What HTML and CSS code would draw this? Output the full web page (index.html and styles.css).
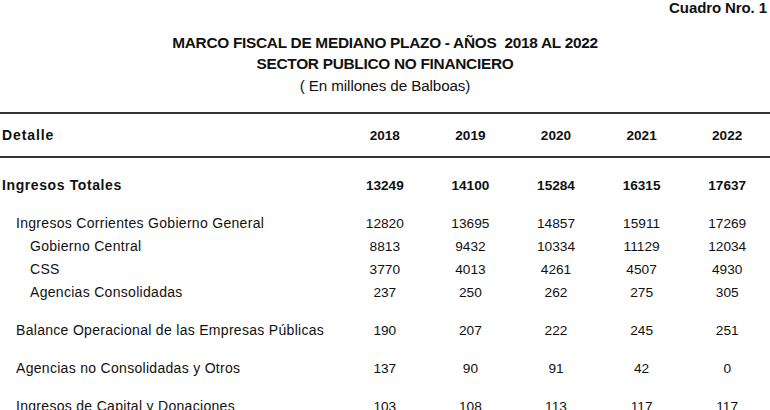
FILE: index.html
```html
<!DOCTYPE html>
<html lang="es">
<head>
<meta charset="utf-8">
<link rel="stylesheet" href="styles.css">
</head>
<body>
<div class="page">
  <div class="cuadro">Cuadro Nro. 1</div>
  <div class="titles">
    <div class="title">MARCO FISCAL DE MEDIANO PLAZO - AÑOS&nbsp; 2018 AL 2022</div>
    <div class="title">SECTOR PUBLICO NO FINANCIERO</div>
    <div class="subtitle">( En millones de Balboas)</div>
  </div>
  <div class="table">
    <div class="row head">
      <div class="label">Detalle</div>
      <div class="num">2018</div><div class="num">2019</div><div class="num">2020</div><div class="num">2021</div><div class="num">2022</div>
    </div>
    <div class="group first">
      <div class="row bold">
        <div class="label">Ingresos Totales</div>
        <div class="num">13249</div><div class="num">14100</div><div class="num">15284</div><div class="num">16315</div><div class="num">17637</div>
      </div>
    </div>
    <div class="group">
      <div class="row">
        <div class="label l1">Ingresos Corrientes Gobierno General</div>
        <div class="num">12820</div><div class="num">13695</div><div class="num">14857</div><div class="num">15911</div><div class="num">17269</div>
      </div>
      <div class="row">
        <div class="label l2">Gobierno Central</div>
        <div class="num">8813</div><div class="num">9432</div><div class="num">10334</div><div class="num">11129</div><div class="num">12034</div>
      </div>
      <div class="row">
        <div class="label l2">CSS</div>
        <div class="num">3770</div><div class="num">4013</div><div class="num">4261</div><div class="num">4507</div><div class="num">4930</div>
      </div>
      <div class="row">
        <div class="label l2">Agencias Consolidadas</div>
        <div class="num">237</div><div class="num">250</div><div class="num">262</div><div class="num">275</div><div class="num">305</div>
      </div>
    </div>
    <div class="group">
      <div class="row">
        <div class="label l1">Balance Operacional de las Empresas Públicas</div>
        <div class="num">190</div><div class="num">207</div><div class="num">222</div><div class="num">245</div><div class="num">251</div>
      </div>
    </div>
    <div class="group">
      <div class="row">
        <div class="label l1">Agencias no Consolidadas y Otros</div>
        <div class="num">137</div><div class="num">90</div><div class="num">91</div><div class="num">42</div><div class="num">0</div>
      </div>
    </div>
    <div class="group">
      <div class="row">
        <div class="label l1">Ingresos de Capital y Donaciones</div>
        <div class="num">103</div><div class="num">108</div><div class="num">113</div><div class="num">117</div><div class="num">117</div>
      </div>
    </div>
  </div>
</div>
</body>
</html>
```

FILE: styles.css
```css
html, body {
  margin: 0;
  padding: 0;
  background: #ffffff;
}
body {
  width: 770px;
  height: 410px;
  overflow: hidden;
  color: #111111;
  font-family: "Liberation Sans", Arial, sans-serif;
}
.page {
  display: flex;
  flex-direction: column;
}
.cuadro {
  font-weight: bold;
  font-size: 15px;
  line-height: 16px;
  height: 16px;
  letter-spacing: -0.1px;
  text-align: right;
  padding-right: 3px;
}
.titles {
  margin-top: 16px;
  display: flex;
  flex-direction: column;
  align-items: center;
}
.title {
  font-weight: bold;
  font-size: 15.4px;
  line-height: 21px;
  height: 21px;
  letter-spacing: -0.28px;
}
.subtitle {
  font-size: 15.2px;
  line-height: 23px;
  height: 23px;
  letter-spacing: -0.1px;
}
.table {
  margin-top: 15px;
  border-top: 2px solid #333333;
}
.row {
  display: grid;
  grid-template-columns: 342px repeat(5, 1fr);
  font-size: 14px;
  line-height: 23px;
  height: 23px;
}
.row .label {
  letter-spacing: 0.3px;
}
.num {
  text-align: center;
  font-size: 13.7px;
}
.row.head {
  height: 42px;
  line-height: 43px;
  border-bottom: 2px solid #333333;
  font-weight: bold;
}
.row.head .label {
  letter-spacing: 0.9px;
}
.row.head .num,
.row.bold .num {
  font-size: 13.6px;
}
.row.bold {
  font-weight: bold;
}
.row.bold .label {
  letter-spacing: 0.6px;
}
.label {
  padding-left: 2px;
  white-space: nowrap;
}
.label.l1 { padding-left: 16px; }
.label.l2 { padding-left: 30px; }
.group {
  margin-top: 15px;
}
.group.first {
  margin-top: 15.5px;
}
```
